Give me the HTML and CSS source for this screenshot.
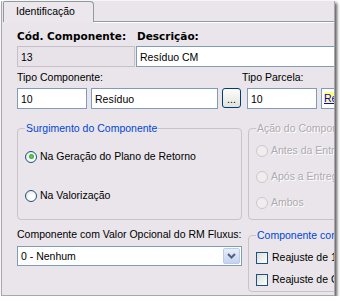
FILE: index.html
```html
<!DOCTYPE html>
<html>

<head>
    <title>Identificação</title>
    <link rel="stylesheet" href="styles.css">
</head>

<body>
    <section class="window">
        <div class="tabbar">
            <div class="tab">Identificação</div>
            <div class="tab-fill"></div>
        </div>
        <div class="panel">
            <div class="row labels first">
                <label class="bold w-cod">Cód. Componente:</label>
                <label class="bold">Descrição:</label>
            </div>
            <div class="row fields">
                <input class="w-cod" value="13" disabled />
                <input class="w-desc" value="Resíduo CM" />
            </div>

            <div class="row labels second">
                <label class="w-left">Tipo Componente:</label>
                <label>Tipo Parcela:</label>
            </div>
            <div class="row fields">
                <input class="w-tipo" value="10" />
                <input class="w-nome" value="Resíduo" />
                <button class="dots">...</button>
                <input class="w-parcela" value="10" />
                <span class="link-box"><a href="#">Re</a></span>
            </div>

            <div class="row groups">
                <fieldset class="w-left">
                    <legend>Surgimento do Componente</legend>
                    <div class="opt opt-a"><span class="radio checked"></span>Na Geração do Plano de Retorno</div>
                    <div class="opt opt-b"><span class="radio"></span>Na Valorização</div>
                </fieldset>
                <fieldset class="side disabled">
                    <legend>Ação do Componente</legend>
                    <div class="opt opt-c"><span class="radio"></span>Antes da Entrega</div>
                    <div class="opt opt-d"><span class="radio"></span>Após a Entrega</div>
                    <div class="opt opt-d"><span class="radio"></span>Ambos</div>
                </fieldset>
            </div>

            <div class="row bottom">
                <div class="w-left">
                    <label>Componente com Valor Opcional do RM Fluxus:</label>
                    <div class="select">
                        <span class="value">0 - Nenhum</span>
                        <span class="drop">
                            <svg width="9" height="6" viewBox="0 0 9 6"><path d="M1 1l3.5 3.5L8 1" fill="none" stroke="#4d6185" stroke-width="2"/></svg>
                        </span>
                    </div>
                </div>
                <fieldset class="side small">
                    <legend>Componente com Reajuste</legend>
                    <div class="opt opt-e"><span class="check"></span>Reajuste de 13º</div>
                    <div class="opt opt-e"><span class="check"></span>Reajuste de Correção</div>
                </fieldset>
            </div>
        </div>
    </section>
</body>

</html>
```

FILE: styles.css
```css
* {
    box-sizing: border-box;
}

body {
    margin: 0;
    padding: 1px 0 0 1px;
    background: #fff;
    font-family: "Liberation Sans", Arial, sans-serif;
    font-size: 10.5px;
    line-height: 13px;
    color: #000;
}

.window {
    width: 334px;
    height: 295px;
    background: #e9e5ea;
    border: 1px solid #aaa6ab;
    border-top: none;
    box-shadow: 2px 2px 3px rgba(0, 0, 0, 0.65);
    overflow: hidden;
    display: flex;
    flex-direction: column;
}

.tabbar {
    display: flex;
    height: 21px;
    flex: none;
}

.tab {
    width: 91px;
    height: 21px;
    margin-left: 1px;
    padding: 3px 0 0 12px;
    border: 1px solid #919b9c;
    border-bottom: none;
    border-radius: 2px 4px 0 0;
    background: #ebe7ec;
}

.tab-fill {
    flex: 1;
    border-bottom: 1px solid #919b9c;
    box-shadow: 0 1px #fff;
}

.panel {
    flex: 1;
    padding-left: 15px;
}

.row {
    display: flex;
}

.labels.first {
    margin-top: 8px;
}

.labels.second {
    margin-top: 4px;
}

.bold {
    font-family: "DejaVu Sans", Verdana, sans-serif;
    font-weight: bold;
    font-size: 10.5px;
}

.first .w-cod {
    width: 120px;
}

.fields {
    margin-top: 3px;
    white-space: nowrap;
}

.second + .fields {
    margin-top: 4px;
}

input {
    height: 21px;
    padding: 0 3px;
    border: 1px solid #7f9db9;
    background: #fff;
    font: inherit;
    color: #000;
    flex: none;
}

input:disabled {
    background: #e7e3e8;
    border-color: #c4c0c5;
    color: #000;
}

input.w-cod {
    width: 118px;
}

.w-desc {
    width: 230px;
    margin-left: 1px;
}

.w-left {
    width: 225px;
    flex: none;
}

.w-tipo {
    width: 70px;
}

.w-nome {
    width: 127px;
    margin-left: 4px;
}

.dots {
    width: 19px;
    height: 20px;
    margin-left: 4px;
    padding: 0;
    border: 1px solid #003c74;
    border-radius: 3px;
    background: linear-gradient(#fdfdfc, #e3e2dc);
    font: inherit;
    line-height: 20px;
    flex: none;
}

.w-parcela {
    width: 70px;
    margin-left: 6px;
}

.link-box {
    width: 40px;
    height: 21px;
    margin-left: 4px;
    padding: 3px 0 0 2px;
    border: 1px solid #7f9db9;
    background: #fff;
    flex: none;
}

.link-box a {
    color: #0000ee;
    background: #ffff80;
}

.groups {
    margin-top: 13px;
    gap: 6px;
}

fieldset {
    margin: 0;
    min-width: 0;
    padding: 0 0 0 7px;
    border: 1px solid #c7c3c8;
    border-radius: 4px;
}

legend {
    padding: 0 1px;
    color: #0046d5;
    white-space: nowrap;
}

.side {
    width: 200px;
    flex: none;
}

.disabled legend,
.disabled .opt {
    color: #aeaaaf;
    text-shadow: 1px 1px #fff;
}

.opt {
    display: flex;
    align-items: center;
    gap: 3px;
    height: 13px;
    white-space: nowrap;
}

.opt-a {
    margin-top: 15px;
}

.opt-b {
    margin-top: 26px;
    margin-bottom: 17px;
}

.opt-c {
    margin-top: 9px;
}

.opt-d {
    margin-top: 13px;
}

.opt-e {
    margin-top: 9px;
    gap: 4px;
}

.radio {
    width: 12px;
    height: 12px;
    border: 1px solid #1c5180;
    border-radius: 50%;
    background: radial-gradient(circle at 65% 65%, #fff 30%, #dcdad5);
    display: flex;
    align-items: center;
    justify-content: center;
    flex: none;
}

.radio.checked::after {
    content: "";
    width: 5px;
    height: 5px;
    border-radius: 50%;
    background: radial-gradient(#5ed15e, #21a121);
}

.disabled .radio {
    border-color: #cdc9c6;
    background: #efedef;
}

.check {
    width: 12px;
    height: 12px;
    border: 1px solid #1c5180;
    background: linear-gradient(135deg, #dcdcd7, #fff);
    flex: none;
}

.bottom {
    margin-top: 8px;
    gap: 6px;
    align-items: flex-start;
}

.select {
    display: flex;
    align-items: center;
    height: 20px;
    margin-top: 5px;
    border: 1px solid #7f9db9;
    background: #fff;
}

.select .value {
    flex: 1;
    padding-left: 3px;
}

.drop {
    width: 17px;
    height: 16px;
    margin-right: 1px;
    border: 1px solid #bccbe8;
    border-radius: 2px;
    background: linear-gradient(#e8eefa, #c6d3ef);
    display: flex;
    align-items: center;
    justify-content: center;
}

.small {
    margin-top: 1px;
    padding-bottom: 5px;
}
```
